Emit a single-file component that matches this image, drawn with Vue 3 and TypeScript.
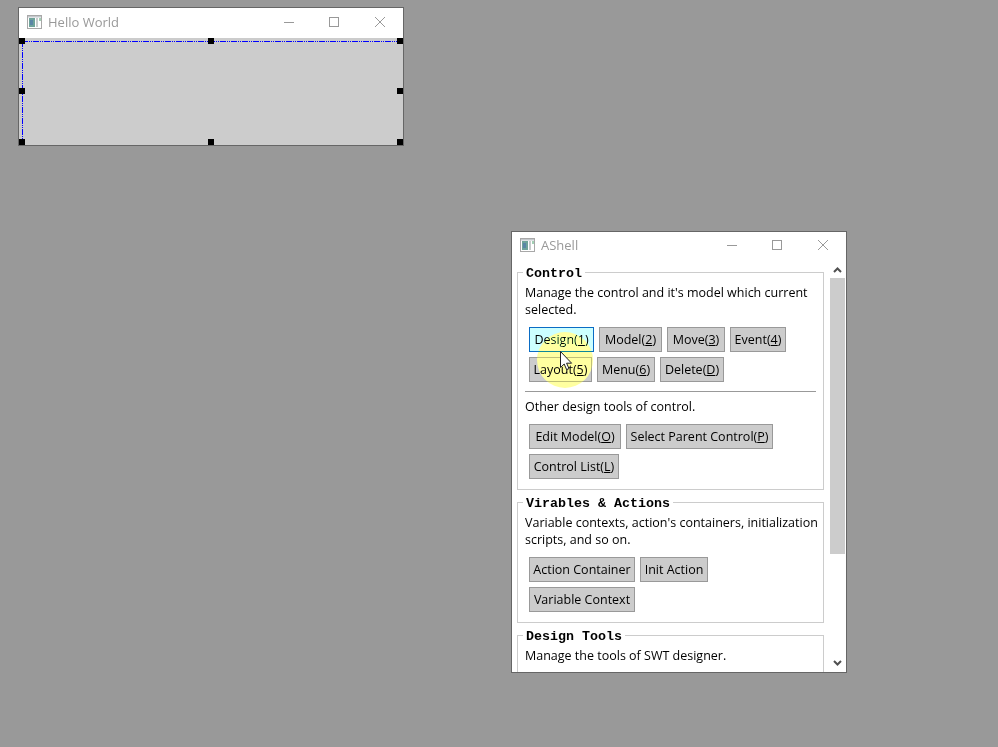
<script setup lang="ts">
import { ref } from 'vue'

interface Action {
    label: string
    width: number
    key?: string
    active?: boolean
}

const controlRows = ref<Action[]>([
    { label: 'Design', width: 65, key: '1', active: true },
    { label: 'Model', width: 63, key: '2' },
    { label: 'Move', width: 58, key: '3' },
    { label: 'Event', width: 56, key: '4' },
    { label: 'Layout', width: 63, key: '5' },
    { label: 'Menu', width: 58, key: '6' },
    { label: 'Delete', width: 64, key: 'D' }
])
const otherTools = ref<Action[]>([
    { label: 'Edit Model', width: 92, key: 'O' },
    { label: 'Select Parent Control', width: 147, key: 'P' },
    { label: 'Control List', width: 90, key: 'L' }
])
const varActions = ref<Action[]>([
    { label: 'Action Container', width: 106 },
    { label: 'Init Action', width: 68 },
    { label: 'Variable Context', width: 106 }
])
const handleClasses = ['tl', 'tc', 'tr', 'ml', 'mr', 'bl', 'bc', 'br']
</script>

<template>
    <div class="desktop">
        <div class="window hello">
            <div class="titlebar">
                <svg class="app-icon" width="15" height="14" viewBox="0 0 15 14">
                    <rect x="0.5" y="0.5" width="14" height="13" fill="#fff" stroke="#a8a8a8" />
                    <rect x="1" y="1" width="13" height="1.5" fill="#c4c8cc" />
                    <rect x="2" y="3" width="6" height="9" fill="#6fa39a" />
                    <rect x="3" y="5" width="3" height="5" fill="#5a86a6" />
                    <rect x="9" y="3" width="2" height="9" fill="#c8cccc" />
                    <rect x="12" y="3" width="2" height="3" fill="#a2cfb4" />
                </svg>
                <span class="title">Hello World</span>
                <div class="caption-btns">
                    <svg width="10" height="10" viewBox="0 0 10 10"><path d="M0 5.5H10" stroke="#999" fill="none" /></svg>
                    <svg width="10" height="10" viewBox="0 0 10 10"><rect x="0.5" y="0.5" width="9" height="9" stroke="#999" fill="none" /></svg>
                    <svg width="10" height="10" viewBox="0 0 10 10"><path d="M0 0L10 10M10 0L0 10" stroke="#999" fill="none" /></svg>
                </div>
            </div>
            <div class="surface">
                <svg class="select-lines" width="384" height="107" viewBox="0 0 384 107">
                    <path d="M3 3.5H384" stroke="#0000ff" stroke-dasharray="6 1 1 1 1 1" fill="none" shape-rendering="crispEdges" />
                    <path d="M3.5 3V107" stroke="#0000ff" stroke-dasharray="6 1 1 1 1 1" fill="none" shape-rendering="crispEdges" />
                </svg>
                <i v-for="h in handleClasses" :key="h" class="handle" :class="h"></i>
            </div>
        </div>

        <div class="window ashell">
            <div class="titlebar">
                <svg class="app-icon" width="15" height="14" viewBox="0 0 15 14">
                    <rect x="0.5" y="0.5" width="14" height="13" fill="#fff" stroke="#a8a8a8" />
                    <rect x="1" y="1" width="13" height="1.5" fill="#c4c8cc" />
                    <rect x="2" y="3" width="6" height="9" fill="#6fa39a" />
                    <rect x="3" y="5" width="3" height="5" fill="#5a86a6" />
                    <rect x="9" y="3" width="2" height="9" fill="#c8cccc" />
                    <rect x="12" y="3" width="2" height="3" fill="#a2cfb4" />
                </svg>
                <span class="title">AShell</span>
                <div class="caption-btns">
                    <svg width="10" height="10" viewBox="0 0 10 10"><path d="M0 5.5H10" stroke="#999" fill="none" /></svg>
                    <svg width="10" height="10" viewBox="0 0 10 10"><rect x="0.5" y="0.5" width="9" height="9" stroke="#999" fill="none" /></svg>
                    <svg width="10" height="10" viewBox="0 0 10 10"><path d="M0 0L10 10M10 0L0 10" stroke="#999" fill="none" /></svg>
                </div>
            </div>
            <div class="shell-body">
                <div class="panel">
                    <section class="group">
                        <h3 class="legend">Control</h3>
                        <p class="desc">Manage the control and it's model which current selected.</p>
                        <div class="btn-row">
                            <button v-for="a in controlRows" :key="a.label" class="btn" :class="{ active: a.active }"
                                :style="{ width: a.width + 'px' }">
                                {{ a.label }}(<u>{{ a.key }}</u>)
                            </button>
                        </div>
                        <hr class="sep" />
                        <p class="desc">Other design tools of control.</p>
                        <div class="btn-row">
                            <button v-for="a in otherTools" :key="a.label" class="btn" :style="{ width: a.width + 'px' }">
                                {{ a.label }}(<u>{{ a.key }}</u>)
                            </button>
                        </div>
                    </section>
                    <section class="group">
                        <h3 class="legend">Virables &amp; Actions</h3>
                        <p class="desc">Variable contexts, action's containers, initialization scripts, and so on.</p>
                        <div class="btn-row">
                            <button v-for="a in varActions" :key="a.label" class="btn" :style="{ width: a.width + 'px' }">
                                {{ a.label }}
                            </button>
                        </div>
                    </section>
                    <section class="group">
                        <h3 class="legend">Design Tools</h3>
                        <p class="desc">Manage the tools of SWT designer.</p>
                    </section>
                </div>
                <div class="scrollbar">
                    <svg width="9" height="6" viewBox="0 0 9 6"><path d="M1 5L4.5 1.5L8 5" stroke="#505050" stroke-width="2" fill="none" /></svg>
                    <div class="thumb"></div>
                    <svg class="down" width="9" height="6" viewBox="0 0 9 6"><path d="M1 1L4.5 4.5L8 1" stroke="#505050" stroke-width="2" fill="none" /></svg>
                </div>
            </div>
        </div>

        <!-- mouse highlight: lift the greys first, then tint, so text stays dark -->
        <div class="pointer-halo dodge"></div>
        <div class="pointer-halo tint"></div>
        <svg class="pointer" width="13" height="20" viewBox="0 0 13 20">
            <path d="M0.5 0.5V16.5L4.2 13L6.6 18.6L9 17.6L6.6 12.2H11.6Z" fill="#fff" stroke="#222" />
        </svg>
    </div>
</template>

<style scoped>
.desktop {
    position: relative;
    width: 998px;
    height: 747px;
    overflow: hidden;
    background-color: #999;
    font-family: "Open Sans", "Noto Sans", sans-serif;
    font-size: 12.5px;
    color: #000;
}

.window {
    position: absolute;
    box-sizing: border-box;
    display: flex;
    flex-direction: column;
    background-color: #fff;
    border: 1px solid #666;
}

.hello {
    left: 18px;
    top: 7px;
    width: 386px;
    height: 139px;
}

.ashell {
    left: 511px;
    top: 231px;
    width: 336px;
    height: 442px;
}

.titlebar {
    box-sizing: border-box;
    display: flex;
    align-items: center;
    flex: none;
    height: 30px;
    padding: 0 0 2px 8px;
}

.ashell .titlebar {
    height: 27px;
    padding-bottom: 1px;
}

.title {
    margin-left: 6px;
    font-size: 13px;
    color: #999;
}

.caption-btns {
    display: flex;
    align-items: center;
    gap: 35px;
    margin-left: auto;
    padding-right: 18px;
}

.caption-btns svg:last-child {
    margin-left: 1px;
}

.surface {
    position: relative;
    flex: 1;
    background-color: #ccc;
}

.select-lines {
    position: absolute;
    left: 0;
    top: 0;
}

.handle {
    position: absolute;
    width: 6px;
    height: 6px;
    background-color: #000;
}

.tl { left: 0; top: 0; }
.tc { left: 189px; top: 0; }
.tr { left: 378px; top: 0; }
.ml { left: 0; top: 50px; }
.mr { left: 378px; top: 50px; }
.bl { left: 0; top: 101px; }
.bc { left: 189px; top: 101px; }
.br { left: 378px; top: 101px; }

.shell-body {
    display: flex;
    flex: 1;
    min-height: 0;
    overflow: hidden;
}

.panel {
    box-sizing: border-box;
    display: flex;
    flex-direction: column;
    gap: 12px;
    width: 318px;
    padding: 13px 0 0 5px;
}

.group {
    box-sizing: border-box;
    flex: none;
    position: relative;
    width: 307px;
    padding: 11px 7px 10px 7px;
    border: 1px solid #ccc;
}

.legend {
    position: absolute;
    left: 5px;
    top: -6px;
    margin: 0;
    padding: 0 3px;
    background-color: #fff;
    font-family: "Liberation Mono", "DejaVu Sans Mono", monospace;
    font-size: 13.33px;
    line-height: 14px;
    font-weight: bold;
    color: #000;
}

.desc {
    margin: 0 -4px 0 0;
    line-height: 17px;
}

.btn-row {
    display: flex;
    flex-wrap: wrap;
    gap: 5px;
    margin-top: 9px;
    padding-left: 4px;
}

.btn {
    box-sizing: border-box;
    height: 25px;
    padding: 0;
    border: 1px solid #999;
    background-color: #ccc;
    font: inherit;
    white-space: nowrap;
    color: #000;
}

.btn.active {
    border-color: #0a6cc4;
    background-color: #ccffff;
}

.sep {
    height: 1px;
    margin: 9px 0 6px;
    border: none;
    background-color: #999;
}

.scrollbar {
    position: relative;
    display: flex;
    flex-direction: column;
    align-items: center;
    flex: none;
    width: 15px;
    padding-top: 8px;
}

.thumb {
    width: 15px;
    height: 276px;
    margin-top: 5px;
    background-color: #ccc;
}

.down {
    position: absolute;
    left: 3px;
    bottom: 6px;
}

.pointer-halo {
    position: absolute;
    left: 537px;
    top: 332px;
    width: 56px;
    height: 56px;
    border-radius: 50%;
}

.dodge {
    background-color: #333;
    mix-blend-mode: color-dodge;
}

.tint {
    background-color: #ffffa0;
    mix-blend-mode: multiply;
}

.pointer {
    position: absolute;
    left: 560px;
    top: 351px;
}
</style>
